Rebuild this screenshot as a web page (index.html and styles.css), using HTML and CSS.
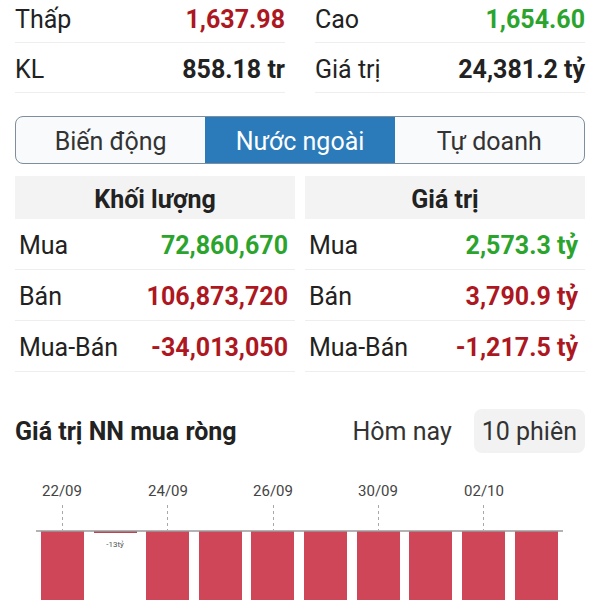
FILE: index.html
```html
<!DOCTYPE html>
<html lang="vi">
<head>
  <meta charset="UTF-8">
  <title>Thị trường - Nước ngoài</title>
  <link rel="stylesheet" href="styles.css">
</head>
<body>

  <div class="page">
    <div class="stats">
      <div class="stat"><span>Thấp</span><b class="down">1,637.98</b></div>
      <div class="stat"><span>Cao</span><b class="up">1,654.60</b></div>
      <div class="stat"><span>KL</span><b>858.18 tr</b></div>
      <div class="stat"><span>Giá trị</span><b>24,381.2 tỷ</b></div>
    </div>

    <div class="tabs">
      <div class="tab">Biến động</div>
      <div class="tab active">Nước ngoài</div>
      <div class="tab">Tự doanh</div>
    </div>

    <div class="tables">
      <div class="table">
        <div class="table-head">Khối lượng</div>
        <div class="row"><span>Mua</span><b class="up">72,860,670</b></div>
        <div class="row"><span>Bán</span><b class="down">106,873,720</b></div>
        <div class="row"><span>Mua-Bán</span><b class="down">-34,013,050</b></div>
      </div>
      <div class="table">
        <div class="table-head">Giá trị</div>
        <div class="row"><span>Mua</span><b class="up">2,573.3 tỷ</b></div>
        <div class="row"><span>Bán</span><b class="down">3,790.9 tỷ</b></div>
        <div class="row"><span>Mua-Bán</span><b class="down">-1,217.5 tỷ</b></div>
      </div>
    </div>

    <div class="chart-head">
      <h2>Giá trị NN mua ròng</h2>
      <div class="switch">
        <span class="opt">Hôm nay</span>
        <span class="opt selected">10 phiên</span>
      </div>
    </div>

    <svg class="chart" width="570" height="147" viewBox="0 0 570 147">
      <!-- date labels + dashed guides -->
      <g class="dates">
        <text x="47" y="43">22/09</text>
        <text x="153" y="43">24/09</text>
        <text x="258" y="43">26/09</text>
        <text x="363" y="43">30/09</text>
        <text x="469" y="43">02/10</text>
      </g>
      <g stroke="#a8a8a8" stroke-width="1" stroke-dasharray="3,3">
        <line x1="47.5" y1="52" x2="47.5" y2="77" />
        <line x1="152.5" y1="52" x2="152.5" y2="77" />
        <line x1="258.5" y1="52" x2="258.5" y2="77" />
        <line x1="363.5" y1="52" x2="363.5" y2="77" />
        <line x1="468.5" y1="52" x2="468.5" y2="77" />
      </g>
      <g fill="#cf4659">
        <rect x="26" y="78" width="43" height="80" />
        <rect x="131" y="78" width="43" height="80" />
        <rect x="184" y="78" width="43" height="80" />
        <rect x="236" y="78" width="43" height="80" />
        <rect x="289" y="78" width="43" height="80" />
        <rect x="342" y="78" width="43" height="80" />
        <rect x="394" y="78" width="43" height="80" />
        <rect x="447" y="78" width="43" height="80" />
        <rect x="500" y="78" width="43" height="80" />
      </g>
      <rect x="79" y="78" width="43" height="2" fill="#b9434f" />
      <text class="small" x="100" y="94">-13tỷ</text>
      <line x1="21" y1="78" x2="548" y2="78" stroke="#9a9a9a" stroke-width="1.5" />
    </svg>
  </div>

</body>
</html>
```

FILE: styles.css
```css
body {
  font-family: Roboto, 'Liberation Sans', Arial, sans-serif;
  margin: 0;
  background-color: #fff;
  color: #222;
  overflow: hidden;
}
.page {
  padding: 0 15px;
  margin-top: -7px;
}
.up {
  color: #2ba42d;
}
.down {
  color: #ad1721;
}

/* top summary */
.stats {
  display: grid;
  grid-template-columns: 1fr 1fr;
  column-gap: 30px;
}
.stat {
  display: flex;
  justify-content: space-between;
  align-items: center;
  height: 50px;
  box-sizing: border-box;
  padding-top: 3px;
  border-bottom: 1px solid #eeeeee;
  font-size: 25px;
}
.stat b {
  font-weight: 700;
}

/* tabs */
.tabs {
  display: grid;
  grid-template-columns: 1fr 1fr 1fr;
  margin-top: 23px;
  height: 48px;
  box-sizing: border-box;
  border: 1px solid #7f8e9c;
  border-radius: 8px;
  overflow: hidden;
  background-color: #f8fafc;
}
.tab {
  display: flex;
  align-items: center;
  justify-content: center;
  padding-top: 3px;
  font-size: 25px;
  color: #333;
}
.tab.active {
  background-color: #2b7bba;
  color: #fff;
}

/* foreign trading tables */
.tables {
  display: grid;
  grid-template-columns: 1fr 1fr;
  column-gap: 10px;
  margin-top: 12px;
}
.table-head {
  height: 43px;
  box-sizing: border-box;
  padding-top: 4px;
  background-color: #f3f3f3;
  display: flex;
  align-items: center;
  justify-content: center;
  font-size: 25px;
  font-weight: 700;
}
.row {
  display: flex;
  justify-content: space-between;
  align-items: center;
  height: 51px;
  box-sizing: border-box;
  padding: 3px 7px 0 4px;
  border-bottom: 1px solid #eeeeee;
  font-size: 25px;
}

/* chart */
.chart-head {
  display: flex;
  justify-content: space-between;
  align-items: center;
  margin-top: 37px;
}
.chart-head h2 {
  margin: 0;
  font-size: 25px;
  font-weight: 700;
}
.switch {
  display: flex;
  gap: 14px;
}
.opt {
  font-size: 25px;
  color: #333;
  padding: 8px 8px 7px;
  border-radius: 8px;
}
.opt.selected {
  background-color: #f2f2f2;
}
.chart {
  display: block;
}
.dates text {
  font-size: 15px;
  fill: #444;
  text-anchor: middle;
}
.chart .small {
  font-size: 8px;
  fill: #555;
  text-anchor: middle;
}
```
